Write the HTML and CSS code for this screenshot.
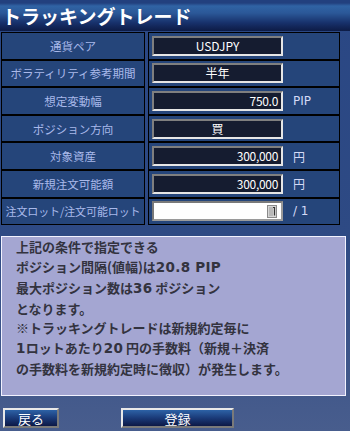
FILE: index.html
```html
<!DOCTYPE html>
<html lang="ja">
<head>
<meta charset="utf-8">
<link rel="stylesheet" href="styles.css">
</head>
<body>
<div class="page">
  <header class="titlebar"><h1>トラッキングトレード</h1></header>
  <div class="form">
    <div class="label">通貨ペア</div>
    <div class="value"><span class="box center">USDJPY</span></div>
    <div class="label">ボラティリティ参考期間</div>
    <div class="value"><span class="box center">半年</span></div>
    <div class="label">想定変動幅</div>
    <div class="value"><span class="box right">750.0</span><span class="unit">PIP</span></div>
    <div class="label">ポジション方向</div>
    <div class="value"><span class="box center">買</span></div>
    <div class="label">対象資産</div>
    <div class="value"><span class="box right">300,000</span><span class="unit">円</span></div>
    <div class="label">新規注文可能額</div>
    <div class="value"><span class="box right">300,000</span><span class="unit">円</span></div>
    <div class="label tight">注文ロット/注文可能ロット</div>
    <div class="value"><span class="box white"><svg class="ime" width="10" height="13" viewBox="0 0 10 13"><rect x="0.5" y="0.5" width="9" height="12" fill="#d6d6d6" stroke="#8a8a8a"/><rect x="2" y="2" width="4" height="9" fill="#b8b8b8"/><path d="M6 2.5h1.5v8" stroke="#333" stroke-width="1.2" fill="none"/></svg></span><span class="unit">/ 1</span></div>
  </div>
  <div class="info">
    <p>上記の条件で指定できる</p>
    <p>ポジション間隔(値幅)は<span class="lat">20.8 PIP</span></p>
    <p>最大ポジション数は<span class="lat">36</span> ポジション</p>
    <p>となります。</p>
    <p>※トラッキングトレードは新規約定毎に</p>
    <p><span class="lat">1</span>ロットあたり<span class="lat">20</span> 円の手数料（新規＋決済</p>
    <p>の手数料を新規約定時に徴収）が発生します。</p>
  </div>
  <div class="buttons">
    <button class="btn back">戻る</button>
    <button class="btn submit">登録</button>
  </div>
</div>
</body>
</html>
```

FILE: styles.css
```css
* { box-sizing: border-box; }
html, body { margin: 0; padding: 0; }
body {
  width: 350px;
  height: 431px;
  overflow: hidden;
  font-family: "Noto Sans CJK JP", "Noto Sans", sans-serif;
  background: linear-gradient(to bottom, #2a4784 0%, #2e4a84 55%, #485d8d 100%);
}
.page { width: 350px; height: 431px; }
.titlebar {
  height: 31px;
  background: linear-gradient(to bottom, #22407e 0px, #22407e 3px, #3063a4 6px, #2b5898 13px, #17306a 23px, #0d1b45 31px);
  display: flex;
  align-items: center;
  padding-left: 2px;
}
.titlebar h1 {
  margin: 0;
  color: #ffffff;
  font-size: 19px;
  font-weight: bold;
  line-height: 1;
}
.form {
  margin: 1px 0 0 1px;
  display: grid;
  grid-template-columns: 144px 192px;
  grid-auto-rows: 27.6px;
  column-gap: 3px;
}
.label, .value {
  border: 1px solid #000;
  background: #25457a;
}
.label {
  display: flex;
  align-items: center;
  justify-content: center;
  color: #a9b9ea;
  font-size: 11.5px;
  white-space: nowrap;
}
.label.tight { font-size: 11px; letter-spacing: -0.1px; }
.value {
  display: flex;
  align-items: center;
  padding-left: 3px;
}
.box {
  width: 131px;
  height: 20px;
  background: #151c30;
  color: #ffffff;
  font-size: 12px;
  display: flex;
  align-items: center;
  border-style: solid;
  border-width: 2px;
  border-color: #7f7f7f #e6e6e6 #e6e6e6 #7f7f7f;
  padding: 0 3px;
  line-height: 1;
}
.box.center { justify-content: center; }
.box.right { justify-content: flex-end; letter-spacing: -0.3px; }
.box.white {
  background: #ffffff;
  border-color: #7a7a7a #9a9a9a #9a9a9a #7a7a7a;
  justify-content: flex-end;
  padding-right: 4px;
}
.ime { display: block; }
.unit {
  margin-left: 10px;
  color: #d4daf6;
  font-size: 12px;
  font-family: "DejaVu Sans", "Noto Sans CJK JP", sans-serif;
}
.info {
  margin: 11px 0 0 1px;
  width: 345px;
  height: 160px;
  background: #a4a6d2;
  border: 1px solid #f2f2ff;
  padding: 0 0 0 14px;
  color: #33333f;
  font-size: 13px;
  font-weight: bold;
}
.info p {
  margin: 0;
  line-height: 19.8px;
  white-space: nowrap;
}
.lat {
  font-family: "DejaVu Sans", sans-serif;
  font-size: 13.5px;
  letter-spacing: 0.3px;
}
.buttons {
  display: flex;
  margin: 12px 0 0 3px;
  gap: 62px;
}
.btn {
  height: 20px;
  padding: 0;
  margin: 0;
  font-family: "Noto Sans CJK JP", sans-serif;
  font-size: 13px;
  color: #ffffff;
  line-height: 1;
  background: linear-gradient(to bottom, #2d62a6 0%, #1a3a78 50%, #0c1846 100%);
  border-style: solid;
  border-width: 2px;
  border-color: #e8e8e8 #7a7a7a #7a7a7a #e8e8e8;
}
.btn.back { width: 56px; }
.btn.submit { width: 113px; }
```
